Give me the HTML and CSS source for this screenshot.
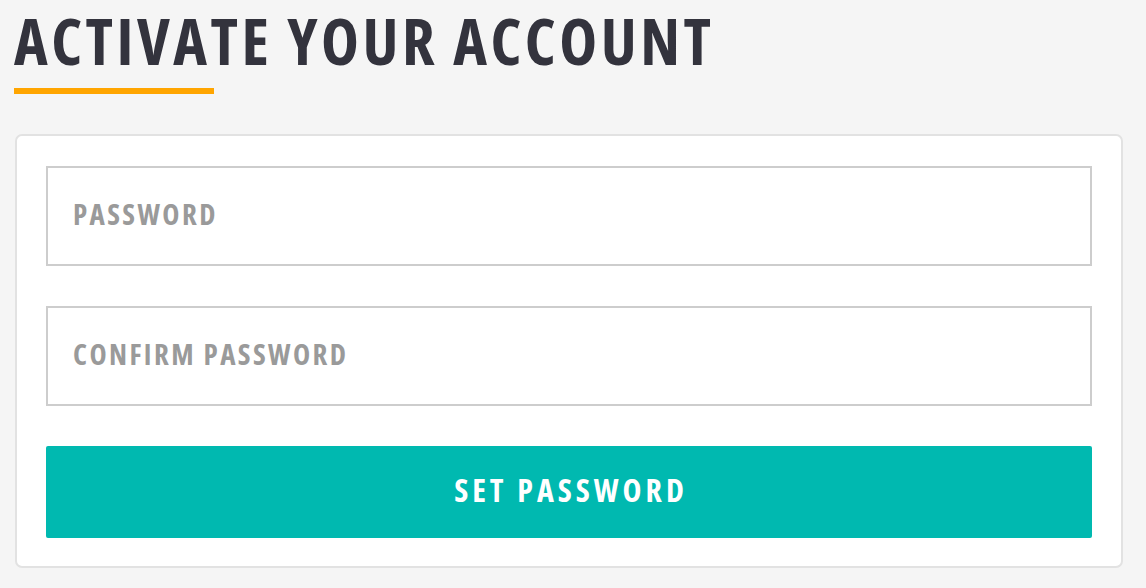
FILE: index.html
```html
<!DOCTYPE html>
<html lang="en">
<head>
<meta charset="utf-8">
<title>Activate your account</title>
<link rel="stylesheet" href="styles.css">
</head>
<body>
<main class="page">
  <h1 class="title">ACTIVATE YOUR ACCOUNT</h1>
  <div class="title-bar"></div>
  <form class="card">
    <input class="field" type="password" placeholder="PASSWORD">
    <input class="field" type="password" placeholder="CONFIRM PASSWORD">
    <button class="submit" type="button">SET PASSWORD</button>
  </form>
</main>
</body>
</html>
```

FILE: styles.css
```css
html, body {
  margin: 0;
  padding: 0;
  background: #f5f5f5;
}
body {
  font-family: "Open Sans", "DejaVu Sans", sans-serif;
  font-stretch: condensed;
}
.page {
  padding: 9px 23px 0 14px;
}
.title {
  margin: 0;
  font-size: 64px;
  line-height: 64px;
  font-weight: 700;
  font-stretch: condensed;
  color: #33333d;
  letter-spacing: 3.5px;
}
.title-bar {
  width: 200px;
  height: 6px;
  background: #ffa500;
  margin-top: 15px;
}
.card {
  margin: 40px 0 0 1px;
  background: #fff;
  border: 2px solid #e2e2e2;
  border-radius: 7px;
  padding: 30px 29px 28px 29px;
  display: flex;
  flex-direction: column;
  gap: 40px;
}
.field {
  box-sizing: border-box;
  height: 100px;
  width: 100%;
  margin: 0;
  border: 2px solid #cdcdcd;
  background: #fff;
  padding: 0 25px 6px 25px;
  font-family: inherit;
  font-stretch: condensed;
  font-size: 29px;
  font-weight: 700;
  letter-spacing: 2.4px;
  color: #333;
  outline: none;
}
.field::placeholder {
  color: #9a9a9a;
  opacity: 1;
}
.submit {
  height: 92px;
  width: 100%;
  margin: 0;
  border: 0;
  border-radius: 2px;
  padding: 0 0 6px 4px;
  background: #00b9b0;
  color: #fff;
  font-family: inherit;
  font-stretch: condensed;
  font-size: 32px;
  font-weight: 700;
  letter-spacing: 4px;
  cursor: pointer;
}
```
